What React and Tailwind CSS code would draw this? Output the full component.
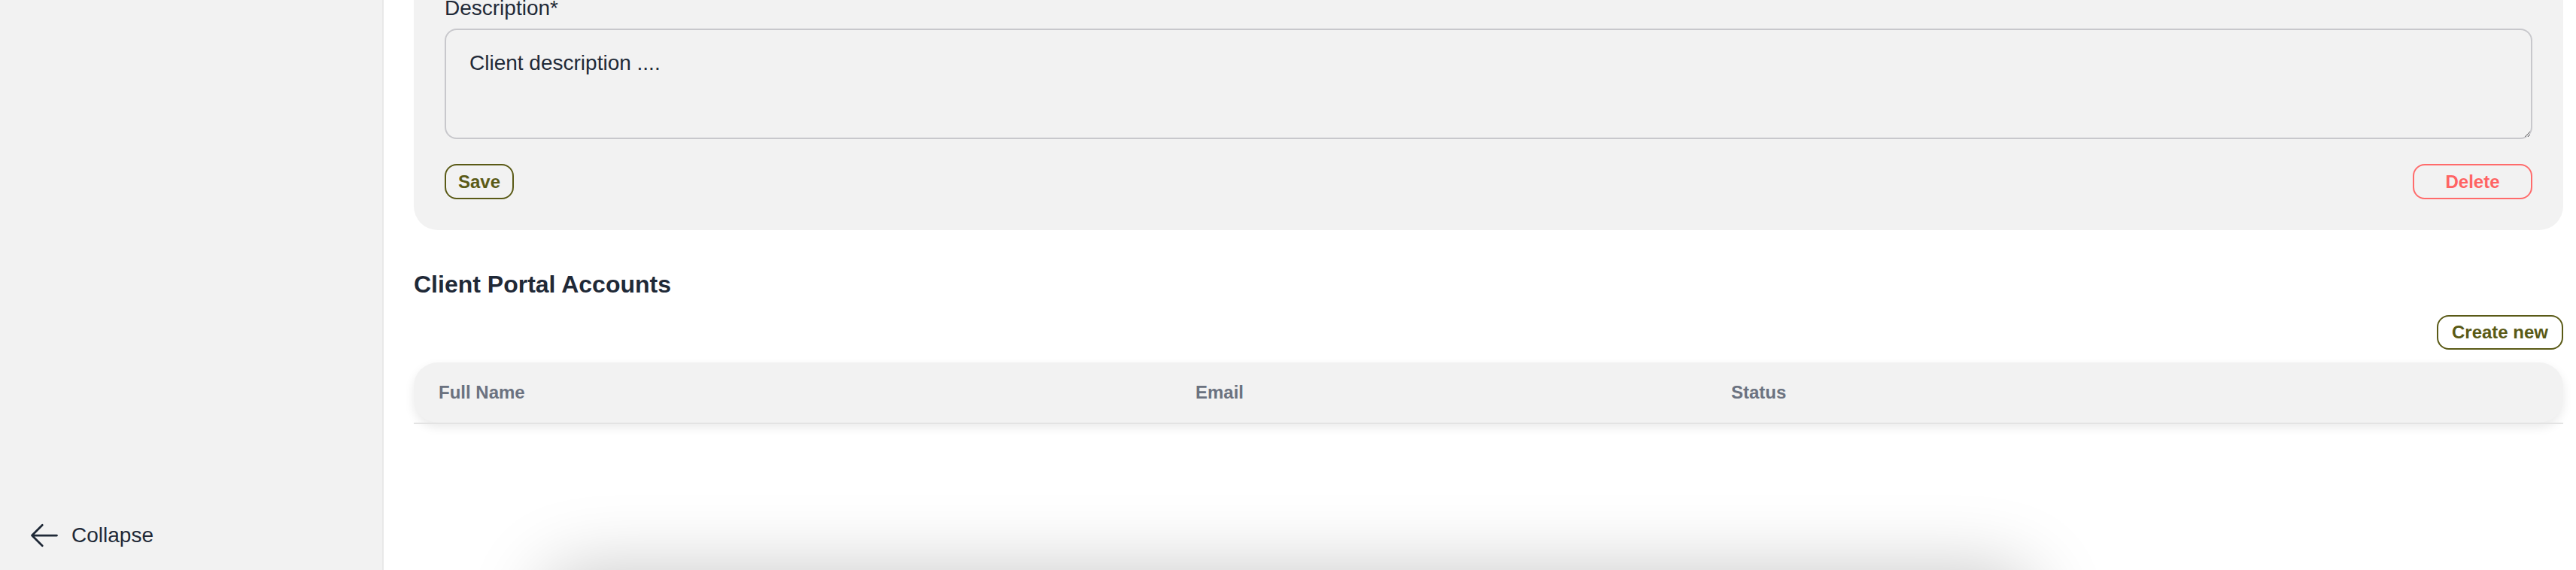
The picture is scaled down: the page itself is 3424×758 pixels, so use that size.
import React from "react";

function ArrowLeft() {
  return (
    <svg width="44" height="44" viewBox="0 0 24 24" fill="none" stroke="#1f2937" strokeWidth="1.5" strokeLinecap="round" strokeLinejoin="round">
      <path d="M10.5 19.5 3 12m0 0 7.5-7.5M3 12h18" />
    </svg>
  );
}

export default function App() {
  return (
    <div className="flex h-[758px] w-full overflow-hidden bg-white font-['Liberation_Sans',Arial,sans-serif] text-[#1f2937]">
      <aside className="flex w-[510px] shrink-0 flex-col justify-end border-r-[2px] border-[#e8e8e8] bg-[#f2f2f2] pb-[24px] pl-[37px]">
        <button className="flex h-[44px] items-center gap-[14px] text-[28px] leading-[40px] text-[#1f2937]">
          <ArrowLeft />
          <span>Collapse</span>
        </button>
      </aside>

      <main className="flex min-w-0 flex-1 flex-col pl-[40px] pr-[17px]">
        <section className="flex flex-col rounded-b-[32px] bg-[#f2f2f2] px-[41px] pb-[41px]">
          <label className="block text-[28px] leading-[22px] text-[#1f2937]">Description*</label>
          <textarea
            className="mt-[16px] block h-[147px] w-full resize-y rounded-[16px] border-[2px] border-[#c8c8cc] bg-transparent px-[31px] pt-[24px] text-[28px] leading-[40px] text-[#1f2937] outline-none"
            defaultValue="Client description ...."
          />
          <div className="mt-[33px] flex items-center justify-between">
            <button className="flex h-[47px] items-center justify-center rounded-[16px] border-[2px] border-[#5a5a16] px-[16px] text-[24px] font-bold leading-[32px] text-[#5a5a16]">
              Save
            </button>
            <button className="flex h-[47px] w-[159px] items-center justify-center rounded-[16px] border-[2px] border-[#ff6b6b] text-[24px] font-bold leading-[32px] text-[#ff6363]">
              Delete
            </button>
          </div>
        </section>

        <h2 className="mt-[52px] text-[32px] font-bold leading-[40px] text-[#1f2937]">Client Portal Accounts</h2>

        <div className="mt-[21px] flex justify-end">
          <button className="flex h-[46px] w-[168px] items-center justify-center rounded-[16px] border-[2px] border-[#5a5a16] text-[24px] font-bold leading-[32px] text-[#5a5a16]">
            Create new
          </button>
        </div>

        <div className="mt-[17px] flex flex-col">
          <div className="grid h-[80px] grid-cols-[1006px_712px_1fr] items-center rounded-[32px] bg-[#f2f2f2] pl-[33px] text-[24px] font-bold leading-[32px] text-[#6b7280] shadow-[0_6px_14px_rgba(0,0,0,0.09)]">
            <div>Full Name</div>
            <div>Email</div>
            <div>Status</div>
          </div>
          <div className="relative h-[2px] bg-[#e3e3e3]" />
        </div>
      </main>

      <div className="pointer-events-none fixed left-1/2 top-full h-[200px] w-[1980px] -translate-x-1/2 rounded-[48px] bg-white shadow-[0_0_100px_rgba(0,0,0,0.22)]" />
    </div>
  );
}
